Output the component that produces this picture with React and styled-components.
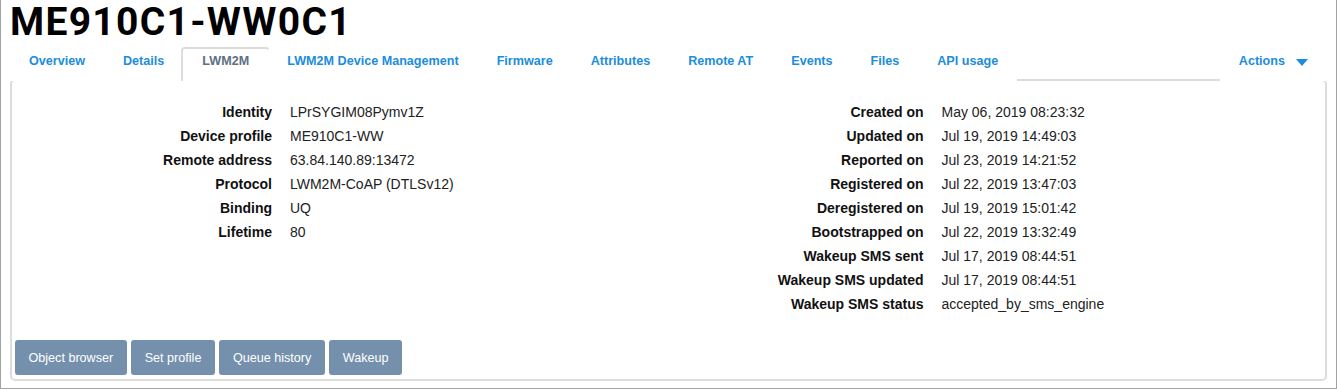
import React from "react";
import styled, { createGlobalStyle } from "styled-components";

const GlobalStyle = createGlobalStyle`
  html, body {
    margin: 0;
    padding: 0;
    background: #fff;
  }
  body {
    font-family: "Liberation Sans", Arial, sans-serif;
    font-size: 14px;
    color: #222;
  }
`;

const Frame = styled.div`
  box-sizing: border-box;
  width: 1337px;
  height: 389px;
  border: 1px solid #a3a3a3;
  border-top: none;
  overflow: hidden;
`;

const Title = styled.h1`
  margin: 0;
  padding: 0 0 0 9px;
  height: 47px;
  box-sizing: border-box;
  font-family: Roboto, "DejaVu Sans", sans-serif;
  font-weight: 700;
  font-size: 39px;
  line-height: 45px;
  letter-spacing: 1.3px;
  color: #000;
`;

const TabBar = styled.ul`
  display: flex;
  list-style: none;
  margin: 0 9px -2px;
  padding: 0;
  position: relative;
  z-index: 1;
`;

const Tab = styled.li`
  box-sizing: border-box;
  height: 34px;
  padding: 5px ${(p) => (p.$active ? "19px" : "17px")} 0;
  display: flex;
  align-items: flex-start;
  gap: 11px;
  font-weight: 700;
  font-size: 12.6px;
  line-height: 15px;
  color: ${(p) => (p.$active ? "#5d7082" : "#1c8ddb")};
  background: #fff;
  border: 2px solid ${(p) => (p.$active ? "#dcdcdc" : "transparent")};
  border-bottom: none;
  border-radius: 4px 4px 0 0;
  margin: ${(p) => (p.$active ? "0 -2px" : "0")};
  margin-left: ${(p) => (p.$right ? "auto" : undefined)};
  cursor: pointer;
`;

const Caret = styled.span`
  margin-top: 5px;
  width: 0;
  height: 0;
  border-left: 6px solid transparent;
  border-right: 6px solid transparent;
  border-top: 7px solid #1c8ddb;
`;

const Panel = styled.div`
  box-sizing: border-box;
  margin: 0 9px;
  height: 302px;
  border: 2px solid #dcdcdc;
  border-radius: 5px;
  display: flex;
  flex-direction: column;
`;

const InfoGrid = styled.div`
  display: grid;
  grid-template-columns: 1fr 1fr;
  padding-top: 19px;
`;

const InfoList = styled.dl`
  margin: 0;
  display: grid;
  grid-template-columns: ${(p) => p.$labelWidth}px 1fr;
  column-gap: 18px;
  align-content: start;
`;

const Label = styled.dt`
  text-align: right;
  font-weight: 700;
  color: #111;
  line-height: 24px;
`;

const Value = styled.dd`
  margin: 0;
  color: #222;
  line-height: 24px;
`;

const ButtonRow = styled.div`
  margin-top: auto;
  display: flex;
  gap: 4.5px;
  padding: 0 0 4px 3px;
`;

const Button = styled.button`
  height: 35px;
  padding: 0 13.5px;
  border: none;
  border-radius: 3px;
  background: #7590ad;
  color: #fff;
  font-family: "Liberation Sans", Arial, sans-serif;
  font-size: 12.6px;
  cursor: pointer;
`;

const tabs = [
  "Overview",
  "Details",
  "LWM2M",
  "LWM2M Device Management",
  "Firmware",
  "Attributes",
  "Remote AT",
  "Events",
  "Files",
  "API usage",
];

const leftInfo = [
  ["Identity", "LPrSYGIM08Pymv1Z"],
  ["Device profile", "ME910C1-WW"],
  ["Remote address", "63.84.140.89:13472"],
  ["Protocol", "LWM2M-CoAP (DTLSv12)"],
  ["Binding", "UQ"],
  ["Lifetime", "80"],
];

const rightInfo = [
  ["Created on", "May 06, 2019 08:23:32"],
  ["Updated on", "Jul 19, 2019 14:49:03"],
  ["Reported on", "Jul 23, 2019 14:21:52"],
  ["Registered on", "Jul 22, 2019 13:47:03"],
  ["Deregistered on", "Jul 19, 2019 15:01:42"],
  ["Bootstrapped on", "Jul 22, 2019 13:32:49"],
  ["Wakeup SMS sent", "Jul 17, 2019 08:44:51"],
  ["Wakeup SMS updated", "Jul 17, 2019 08:44:51"],
  ["Wakeup SMS status", "accepted_by_sms_engine"],
];

const Info = ({ rows, labelWidth }) => (
  <InfoList $labelWidth={labelWidth}>
    {rows.map(([k, v]) => (
      <React.Fragment key={k}>
        <Label>{k}</Label>
        <Value>{v}</Value>
      </React.Fragment>
    ))}
  </InfoList>
);

const App = () => {
  return (
    <Frame>
      <GlobalStyle />
      <Title>ME910C1-WW0C1</Title>
      <TabBar>
        {tabs.map((t) => (
          <Tab key={t} $active={t === "LWM2M"}>
            {t}
          </Tab>
        ))}
        <Tab $right>
          Actions
          <Caret />
        </Tab>
      </TabBar>
      <Panel>
        <InfoGrid>
          <Info rows={leftInfo} labelWidth={260} />
          <Info rows={rightInfo} labelWidth={255} />
        </InfoGrid>
        <ButtonRow>
          <Button>Object browser</Button>
          <Button>Set profile</Button>
          <Button>Queue history</Button>
          <Button>Wakeup</Button>
        </ButtonRow>
      </Panel>
    </Frame>
  );
};

export default App;
